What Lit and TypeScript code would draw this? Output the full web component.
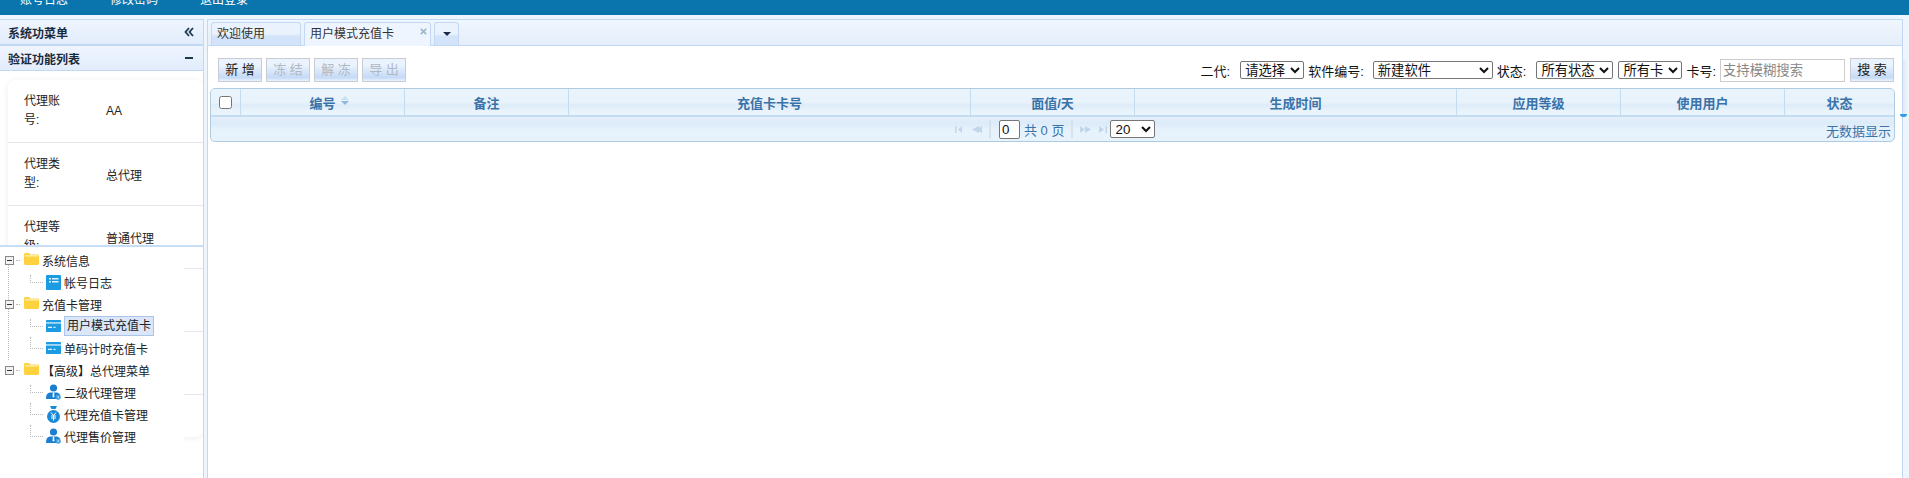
import { LitElement, html, css, svg } from "lit";
import { customElement } from "lit/decorators.js";

const folder = html`<svg class="ico folder" viewBox="0 0 15 12"><path d="M0 1.500C0 .7.7 0 1.500 0h3.500L6.500 1.500h7c.8 0 1.500.7 1.500 1.500v7.500c0 .8-.7 1.500-1.500 1.500h-12C.7 12 0 11.300 0 10.500z" fill="#fdd23e"/><path d="M1 2.200h13v1.300H1z" fill="#fff2bb"/></svg>`;

const listIcon = html`<svg class="ico" viewBox="0 0 15 15"><rect width="15" height="15" rx="1" fill="#1a9be2"/><path d="M3 3h2v1.500H3zM6 3h6.500v1.500H6zM3 6h2v1.500H3zM6 6h6.500v1.500H6z" fill="#e2f3fd"/></svg>`;
const cardIcon = html`<svg class="ico" viewBox="0 0 15 12"><rect width="15" height="12" rx=".8" fill="#1a9be2"/><path d="M0 2.300h15v1.300H0z" fill="#d8effc"/><path d="M2 6.800h4v1.200H2zM7.500 6.800h2v1.200h-2z" fill="#e2f3fd"/></svg>`;
const userIcon = html`<svg class="ico" viewBox="0 0 16 17"><circle cx="8" cy="4.200" r="3.800" fill="#1a7fd0"/><path d="M0 16c0-4 1-6.500 4-7h7.500c2.500.7 3.500 2 3.800 3H11v4z" fill="#1a7fd0"/><path d="M7.300 9h1.400l.3 5H7z" fill="#fff"/><circle cx="13" cy="14" r="2.700" fill="#3aa0e0"/><path d="M13 12.800v2.400" stroke="#fff" stroke-width=".8"/></svg>`;
const bagIcon = html`<svg class="ico" viewBox="0 0 15 17"><path d="M4 0h7L9.500 3h-4z" fill="#1a8ad8"/><circle cx="7.500" cy="10.500" r="6.500" fill="#1a8ad8"/><path d="M5 6.500l2.500 3 2.500-3M5 10h5M5 12h5M7.500 9.500v5" stroke="#fff" stroke-width="1" fill="none"/></svg>`;

interface TreeNode { label: string; icon: unknown; selected?: boolean; }
interface TreeGroup { label: string; children: TreeNode[]; }

const tree: TreeGroup[] = [
  { label: "系统信息", children: [{ label: "帐号日志", icon: listIcon }] },
  { label: "充值卡管理", children: [
    { label: "用户模式充值卡", icon: cardIcon, selected: true },
    { label: "单码计时充值卡", icon: cardIcon },
  ] },
  { label: "【高级】总代理菜单", children: [
    { label: "二级代理管理", icon: userIcon },
    { label: "代理充值卡管理", icon: bagIcon },
    { label: "代理售价管理", icon: userIcon },
  ] },
];

const cardRows = [
  ["代理账号:", "AA"], ["代理类型:", "总代理"], ["代理等级:", "普通代理"],
  ["", ""], ["", ""], ["", ""],
];

const columns: [string, number][] = [
  ["编号", 164], ["备注", 164], ["充值卡卡号", 402], ["面值/天", 164],
  ["生成时间", 322], ["应用等级", 164], ["使用用户", 164], ["状态", 109],
];

@customElement("app-root")
export class AppRoot extends LitElement {
  static styles = css`
    :host { display: block; width: 1909px; height: 478px; overflow: hidden; background: #fff;
      font: 12px "Liberation Sans", "Noto Sans CJK SC", sans-serif; color: #222; }
    .top { height: 15px; background: #0a75ad; display: flex; align-items: flex-end; overflow: hidden;
      color: #fff; font-size: 12px; line-height: 20px; padding-left: 20px; gap: 42px; }
    .top span { margin-bottom: 5px; flex: none; width: 48px; white-space: nowrap; }
    .layout { display: flex; height: 463px; background: #eef5fd; padding-top: 4px; box-sizing: border-box; }
    .side { width: 204px; flex: none; box-sizing: border-box; border-right: 1px solid #c3d8f2; border-top: 1px solid #c3d8f2;
      background: #fff; display: flex; flex-direction: column; position: relative; overflow: hidden; }
    .phead { height: 24px; flex: none; display: flex; align-items: center; justify-content: space-between;
      padding: 0 9px 0 8px; font-weight: bold; color: #1b2a3a; border-bottom: 2px solid #c3d8f2;
      background: linear-gradient(#eff5ff, #e1ecfb); }
    .phead + .phead { border-bottom-width: 1px; }
    .phead svg { width: 10px; height: 10px; }
    .card-wrap { padding: 9px 0 0 8px; }
    .card { border-radius: 8px; box-shadow: 0 1px 6px rgba(0,0,0,.08); background: #fff; height: 357px; overflow: hidden; }
    .row { height: 62px; border-bottom: 1px solid #e4e7ec; display: grid; grid-template-columns: 98px 1fr; align-items: center; }
    .row .k { padding-left: 16px; width: 40px; line-height: 19px; }
    .tree { position: absolute; left: 0; top: 226px; width: 184px; height: 212px; background: #fff; }
    .rule { position: absolute; left: 0; top: 225px; width: 204px; height: 2px; background: #c7dcf5; }
    .tree-inner { padding-top: 3px; position: relative; }
    .vline { position: absolute; left: 8px; top: 19px; height: 95px; border-left: 1px dotted #bbb; }
    .t-row { height: 22px; display: flex; align-items: center; white-space: nowrap; position: relative; }
    .exp { width: 7px; height: 7px; border: 1px solid #888; margin: 0 2px 0 5px; background: #f2f2f2; position: relative; flex: none; }
    .exp::after { content: ""; position: absolute; left: 1px; right: 1px; top: 3px; height: 1px; background: #333; }
    .dash { width: 4px; border-top: 1px dotted #bbb; margin-right: 4px; flex: none; }
    .folder { width: 15px; height: 12px; margin-right: 3px; margin-top: -3px; flex: none; }
    .ico { display: block; flex: none; }
    .child { padding-left: 30px; }
    .conn { width: 13px; flex: none; align-self: stretch; position: relative; margin-right: 2px; }
    .conn::before { content: ""; position: absolute; left: 0; top: 0; bottom: 10px; border-left: 1px dotted #bbb; }
    .conn::after { content: ""; position: absolute; left: 0; right: 0; bottom: 10px; border-top: 1px dotted #bbb; }
    .conn.first::before { top: 4px; }
    .t-ico { width: 16px; height: 17px; display: flex; align-items: center; justify-content: center; margin-right: 3px; flex: none; }
    .t-ico .ico { width: 15px; }
    .sel { background: #dbe7f9; border: 1px solid #a9c6ea; padding: 2px 2px; height: 14px; line-height: 14px; margin-top: -1px; }
    .main { flex: 1; margin-left: 3px; margin-right: 6px; border: 1px solid #c3d8f2; border-bottom: 0; background: #fff; display: flex; flex-direction: column; min-width: 0; position: relative; box-sizing: border-box; }
    .tabs { height: 24px; flex: none; background: linear-gradient(#f0f6fe, #e4eefb); border-bottom: 1px solid #c3d8f2; display: flex; gap: 3px; padding: 1px 0 0 3px; align-items: flex-end; }
    .tab { height: 23px; border: 1px solid #c3d8f2; border-bottom: 0; border-radius: 3px 3px 0 0; box-sizing: border-box; padding: 2px 0 0 5px; background: linear-gradient(#eaf2fd 50%, #d3e3f9 60%); color: #333; line-height: 18px; width: 90px; }
    .tab.active { width: 127px; background: #eef5fe; height: 24px; margin-bottom: -1px; position: relative; }
    .close { position: absolute; top: 5px; right: 3px; display: block; width: 7px; height: 7px; }
    .tab.drop { width: 25px; padding: 0; display: flex; align-items: center; justify-content: center; }
    .tri { width: 0; height: 0; border: 4px solid transparent; border-top-color: #1b2a4a; border-bottom: 0; }
    .content { padding: 12px 0 0 1px; width: 1686px; }
    .toolbar { display: flex; justify-content: space-between; align-items: center; height: 24px; padding-left: 9px; margin-right: 1px; }
    .btns, .filters { display: flex; align-items: center; }
    .btns { gap: 4px; }
    .btn { width: 44px; height: 24px; box-sizing: border-box; border: 1px solid #c8cdd4; background: linear-gradient(#e9f2fd 30%, #c4daf7 85%, #eaf3fe); text-align: center; font-size: 13px; line-height: 22px; color: #222; white-space: pre; }
    .btn.off { color: #b0b8c2; }
    .filters { font-size: 13px; color: #111; }
    select { font: 13.33px "Liberation Sans", "Noto Sans CJK SC", sans-serif; height: 18px; padding: 0; border: 1px solid #767676; border-radius: 2px; background: #fff; color: #111; box-sizing: border-box; }
    .s64 { width: 64px; margin: 0 4px 0 10px; }
    .s120 { width: 120px; margin: 0 4px 0 9px; }
    .s77 { width: 77px; margin: 0 5px 0 10px; }
    .s64b { width: 64px; margin-right: 4px; }
    .search { width: 125px; height: 23px; box-sizing: border-box; border: 1px solid #ccc; font: 13.33px "Liberation Sans", "Noto Sans CJK SC", sans-serif; padding: 0 2px; margin: 1px 5px 0 4px; outline: 0; }
    .search::placeholder { color: #888; }
    .grid { margin: 6px 0 0 1px; border: 1px solid #aecbe2; border-radius: 5px; overflow: hidden; background: linear-gradient(#e7f3fc 50%, #dcebf9 65%, #e7f3fc 80%); }
    .ghead { display: flex; height: 26px; border-bottom: 2px solid #c4dcf0; background: linear-gradient(#e9f3fc 50%, #deecf9 62%, #e9f3fc 85%); }
    .cell { box-sizing: border-box; border-right: 1px solid #c4dcf0; display: flex; align-items: center; justify-content: center; font-weight: bold; font-size: 13px; color: #3a72a8; flex: none; }
    .cell:last-child { border-right: 0; }
    .check { width: 30px; }
    .check input { margin: 0; width: 13px; height: 13px; }
    .label { position: relative; white-space: nowrap; }
    .sort { display: flex; flex-direction: column; gap: 1px; position: absolute; left: 100%; top: 3px; margin-left: 5px; }
    .sort i { width: 0; height: 0; border: 4px solid transparent; }
    .sort i:first-child { border-bottom-color: #c9dff2; border-top: 0; }
    .sort i:last-child { border-top-color: #8fb8dc; border-bottom: 0; }
    .pager { height: 24px; display: flex; align-items: center; position: relative; color: #3a72a8; padding-left: 743px; font-size: 13px; }
    .pg-i { display: flex; gap: 6px; align-items: center; }
    .pg-i svg { width: 11px; height: 7px; display: block; }
    .sep { width: 2px; height: 18px; background: #d5e2ee; margin: 0 7px; }
    .pg-in { width: 21px; height: 19px; box-sizing: border-box; border: 1px solid #767676; border-radius: 2px; font: 13.33px "Liberation Sans", sans-serif; padding: 0 2px; outline: 0; color: #111; margin-left: 1px; }
    .pg-t { margin: 0 0 0 4px; white-space: nowrap; }
    .sep + .pg-i { margin-right: -3px; }
    .pg-s { width: 45px; margin-left: 5px; }
    .nodata { position: absolute; right: 3px; bottom: 1px; line-height: 16px; }
    .track { position: absolute; right: -5px; top: 40px; width: 4px; height: 55px; background: linear-gradient(90deg, #e2e9f3, #eef3f9); }
    .mark { position: absolute; right: -5px; top: 94px; width: 7px; height: 3px; background: #2f9be5; border-radius: 0 0 4px 4px; }
  `;

  private cols() {
    return columns.map(([name, w], i) => html`<div class="cell" style="width:${w}px"><span class="label">${name}${i === 0 ? html`<span class="sort"><i></i><i></i></span>` : ""}</span></div>`);
  }

  private pgIcon(back: boolean, bar: boolean) {
    const t = back
      ? svg`<path d="M${bar ? "4" : "1"} 3.500L8 0v7z" fill="#c2d6ea"/>${bar ? svg`<path d="M1 0h1.500v7H1z" fill="#c2d6ea"/>` : svg`<path d="M5 3.500L11 0v7z" fill="#c2d6ea"/>`}`
      : svg`<path d="M${bar ? "2" : "0"} 0l5 3.500-5 3.500z" fill="#c2d6ea"/>${bar ? svg`<path d="M8.500 0H10v7H8.500z" fill="#c2d6ea"/>` : svg`<path d="M5 0l6 3.500L5 7z" fill="#c2d6ea"/>`}`;
    return html`<svg viewBox="0 0 11 7">${t}</svg>`;
  }

  render() {
    return html`
      <div class="top"><span>账号日志</span><span>修改密码</span><span>退出登录</span></div>
      <div class="layout">
        <aside class="side">
          <div class="phead">系统功菜单
            <svg viewBox="0 0 10 10"><path d="M5 1L1.500 5 5 9M9 1L5.500 5 9 9" fill="none" stroke="#1b3a4a" stroke-width="1.800"/></svg></div>
          <div class="phead">验证功能列表
            <svg viewBox="0 0 10 10"><path d="M1 5h8" stroke="#1b3a4a" stroke-width="2"/></svg></div>
          <div class="card-wrap"><div class="card">
            ${cardRows.map(([k, v]) => html`<div class="row"><div class="k">${k}</div><div>${v}</div></div>`)}
          </div></div>
          <div class="tree"><div class="tree-inner">
            <div class="vline"></div>
            ${tree.map(g => html`
              <div class="t-row"><span class="exp"></span><span class="dash"></span>${folder}<span>${g.label}</span></div>
              ${g.children.map((c, i) => html`
                <div class="t-row child"><span class="conn ${i === 0 ? "first" : ""}"></span><span class="t-ico">${c.icon}</span><span class=${c.selected ? "sel" : ""}>${c.label}</span></div>`)}
            `)}
          </div></div>
          <div class="rule"></div>
        </aside>
        <main class="main">
          <div class="tabs">
            <div class="tab">欢迎使用</div>
            <div class="tab active">用户模式充值卡<svg class="close" viewBox="0 0 7 7"><path d="M.8.800l5.400 5.400M6.200.800L.8 6.200" stroke="#9db8c8" stroke-width="1.700"/></svg></div>
            <div class="tab drop"><span class="tri"></span></div>
          </div>
          <div class="content">
            <div class="toolbar">
              <div class="btns">
                <div class="btn">新 增</div><div class="btn off">冻 结</div><div class="btn off">解 冻</div><div class="btn off">导 出</div>
              </div>
              <div class="filters">
                <span>二代:</span>
                <select class="s64"><option>请选择</option></select>
                <span>软件编号:</span>
                <select class="s120"><option>新建软件</option></select>
                <span>状态:</span>
                <select class="s77"><option>所有状态</option></select>
                <select class="s64b"><option>所有卡</option></select>
                <span>卡号:</span>
                <input class="search" placeholder="支持模糊搜索" />
                <div class="btn">搜 索</div>
              </div>
            </div>
            <div class="grid">
              <div class="ghead">
                <div class="cell check"><input type="checkbox" /></div>
                ${this.cols()}
              </div>
              <div class="pager">
                <span class="pg-i">${this.pgIcon(true, true)}${this.pgIcon(true, false)}</span>
                <span class="sep"></span>
                <input class="pg-in" value="0" />
                <span class="pg-t">共 0 页</span>
                <span class="sep"></span>
                <span class="pg-i">${this.pgIcon(false, false)}${this.pgIcon(false, true)}</span>
                <select class="pg-s"><option>20</option></select>
                <span class="nodata">无数据显示</span>
              </div>
            </div>
          </div>
          <span class="track"></span>
          <span class="mark"></span>
        </main>
      </div>
    `;
  }
}
